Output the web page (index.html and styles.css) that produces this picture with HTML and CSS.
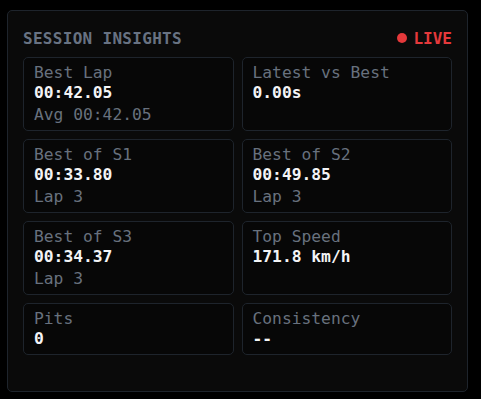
FILE: index.html
```html
<!DOCTYPE html>
<html lang="en">
<head>
    <meta charset="UTF-8">
    <meta name="viewport" content="width=device-width, initial-scale=1.0">
    <title>Session Insights</title>
    <link rel="stylesheet" href="styles.css">
</head>
<body>
    <section class="insights-panel">
        <header class="insights-header">
            <h2 class="insights-title">SESSION INSIGHTS</h2>
            <span class="live-badge"><span class="live-dot"></span>LIVE</span>
        </header>

        <div class="insights-grid">
            <div class="stat-card">
                <div class="stat-label">Best Lap</div>
                <div class="stat-value">00:42.05</div>
                <div class="stat-sub">Avg 00:42.05</div>
            </div>
            <div class="stat-card">
                <div class="stat-label">Latest vs Best</div>
                <div class="stat-value">0.00s</div>
            </div>

            <div class="stat-card">
                <div class="stat-label">Best of S1</div>
                <div class="stat-value">00:33.80</div>
                <div class="stat-sub">Lap 3</div>
            </div>
            <div class="stat-card">
                <div class="stat-label">Best of S2</div>
                <div class="stat-value">00:49.85</div>
                <div class="stat-sub">Lap 3</div>
            </div>

            <div class="stat-card">
                <div class="stat-label">Best of S3</div>
                <div class="stat-value">00:34.37</div>
                <div class="stat-sub">Lap 3</div>
            </div>
            <div class="stat-card">
                <div class="stat-label">Top Speed</div>
                <div class="stat-value">171.8 km/h</div>
            </div>

            <div class="stat-card">
                <div class="stat-label">Pits</div>
                <div class="stat-value">0</div>
            </div>
            <div class="stat-card">
                <div class="stat-label">Consistency</div>
                <div class="stat-value">--</div>
            </div>
        </div>
    </section>
</body>
</html>
```

FILE: styles.css
```css
/* Reset and basic styles */
* {
    margin: 0;
    padding: 0;
    box-sizing: border-box;
}

body {
    font-family: "DejaVu Sans Mono", "Liberation Mono", monospace;
    background-color: #000;
    color: #f3f4f6;
    padding: 10px 13px 0 7px;
}

/* Panel */
.insights-panel {
    height: 382px;
    background-color: #0a0a0a;
    border: 1px solid #1e242c;
    border-radius: 5px;
    padding: 15px 15px;
}

.insights-header {
    display: flex;
    justify-content: space-between;
    align-items: center;
    height: 24px;
    margin-bottom: 7px;
}

.insights-title {
    font-size: 16px;
    font-weight: bold;
    letter-spacing: 0.3px;
    color: #687282;
}

.live-badge {
    display: flex;
    align-items: center;
    gap: 6px;
    font-size: 16px;
    font-weight: bold;
    color: #e5393b;
}

.live-dot {
    width: 10px;
    height: 10px;
    border-radius: 50%;
    background-color: #e5393b;
}

/* Stat cards */
.insights-grid {
    display: grid;
    grid-template-columns: 1fr 1fr;
    gap: 8px;
}

.stat-card {
    border: 1px solid #1e242c;
    border-radius: 5px;
    background-color: #070707;
    padding: 5px 10px;
    font-size: 16.3px;
    line-height: 20px;
}

.stat-label {
    color: #68717e;
}

.stat-value {
    font-weight: bold;
    color: #f3f4f6;
}

.stat-sub {
    margin-top: 2px;
    color: #68717e;
}
```
